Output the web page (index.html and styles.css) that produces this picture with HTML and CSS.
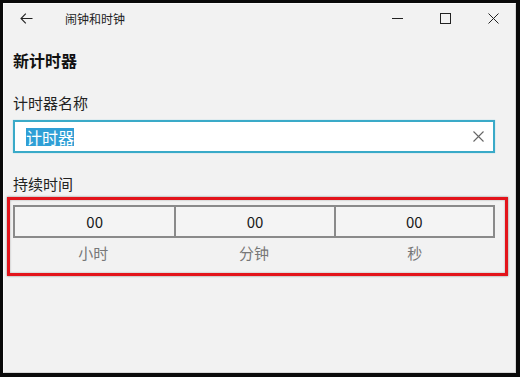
FILE: index.html
```html
<!DOCTYPE html>
<html lang="zh-CN">
<head>
<meta charset="utf-8">
<title>闹钟和时钟</title>
<link rel="stylesheet" href="styles.css">
</head>
<body>
<div class="frame">
  <div class="window">
    <header class="titlebar">
      <div class="back">
        <svg width="13" height="11" viewBox="0 0 13 11"><path d="M12.5 5.5H1M5.8 0.6L1 5.5l4.8 4.9" fill="none" stroke="#222" stroke-width="1.1"/></svg>
      </div>
      <span class="app-title">闹钟和时钟</span>
      <div class="caps">
        <div class="cap"><svg width="11" height="11" viewBox="0 0 11 11"><path d="M0 5.5h11" stroke="#222" stroke-width="1"/></svg></div>
        <div class="cap"><svg width="11" height="11" viewBox="0 0 11 11"><rect x="0.5" y="0.5" width="10" height="10" fill="none" stroke="#222" stroke-width="1"/></svg></div>
        <div class="cap"><svg width="11" height="11" viewBox="0 0 11 11"><path d="M0.5 0.5l10 10M10.5 0.5l-10 10" stroke="#222" stroke-width="1"/></svg></div>
      </div>
    </header>
    <main class="content">
      <h1 class="heading">新计时器</h1>
      <div class="field-label">计时器名称</div>
      <div class="name-input">
        <span class="selected">计时器</span>
        <svg class="clear" width="11" height="11" viewBox="0 0 11 11"><path d="M0.5 0.5l10 10M10.5 0.5l-10 10" stroke="#666" stroke-width="1.1"/></svg>
      </div>
      <div class="field-label dur-label">持续时间</div>
      <div class="annot">
        <div class="dur-grid">
          <div class="dur-cell">00</div>
          <div class="dur-cell">00</div>
          <div class="dur-cell">00</div>
        </div>
        <div class="units">
          <div class="unit">小时</div>
          <div class="unit">分钟</div>
          <div class="unit">秒</div>
        </div>
      </div>
    </main>
  </div>
</div>
</body>
</html>
```

FILE: styles.css
```css
* { box-sizing: border-box; }
html, body { margin: 0; padding: 0; background: #000; }
body {
  width: 520px;
  height: 377px;
  font-family: "Noto Sans CJK SC", "Noto Sans", sans-serif;
  color: #1a1a1a;
}
.frame {
  width: 520px;
  height: 377px;
  border-style: solid;
  border-color: #0a0a0a;
  border-width: 3px 4px 4px 3px;
}
.window {
  width: 100%;
  height: 100%;
  background: #f2f2f2;
  border: 1px solid #fafafa;
  border-right-color: #d6d6d6;
  border-bottom-color: #d6d6d6;
  display: flex;
  flex-direction: column;
}
.titlebar {
  height: 29px;
  display: flex;
  align-items: center;
}
.back {
  width: 48px;
  padding-left: 16px;
  display: flex;
  align-items: center;
}
.app-title {
  margin-left: 13px;
  font-size: 12px;
  line-height: 16px;
  color: #222;
}
.caps {
  margin-left: auto;
  display: flex;
  margin-right: -2px;
}
.cap {
  width: 48px;
  display: flex;
  justify-content: center;
  align-items: center;
}
.content {
  padding: 0 20px 0 9px;
}
.heading {
  margin: 15px 0 0 0;
  font-size: 16px;
  line-height: 24px;
  font-weight: 700;
  color: #111;
}
.field-label {
  margin-top: 21px;
  font-size: 15px;
  line-height: 20px;
  color: #222;
}
.name-input {
  margin-top: 7px;
  height: 33px;
  background: #fff;
  border: 2px solid #3aaac8;
  box-shadow: 0 0 1px #8ccfe0;
  display: flex;
  align-items: center;
  padding: 0 9px 0 11px;
}
.selected {
  background: #2f9fd6;
  color: #fff;
  font-size: 16px;
  line-height: 18px;
}
.clear { margin-left: auto; }
.dur-label { margin-top: 21px; }
.annot {
  margin: 3px -13px 0 -6px;
  border: 3px solid #e3141b;
  box-shadow: 0 0 2px rgba(0,0,0,0.45), inset 0 0 2px rgba(0,0,0,0.35);
  padding: 5px 10px 6px 3px;
}
.dur-grid {
  display: grid;
  grid-template-columns: 1fr 1fr 1fr;
  border: 2px solid #8a8a8a;
  height: 33px;
  background: #f4f4f4;
}
.dur-cell {
  display: flex;
  align-items: center;
  justify-content: center;
  font-size: 15px;
  line-height: 20px;
  padding-top: 1px;
  color: #1a1a1a;
}
.dur-cell + .dur-cell { border-left: 2px solid #8a8a8a; }
.units {
  display: grid;
  grid-template-columns: 1fr 1fr 1fr;
}
.unit {
  text-align: center;
  font-size: 15px;
  line-height: 28px;
  padding-top: 1px;
  color: #777;
}
```
